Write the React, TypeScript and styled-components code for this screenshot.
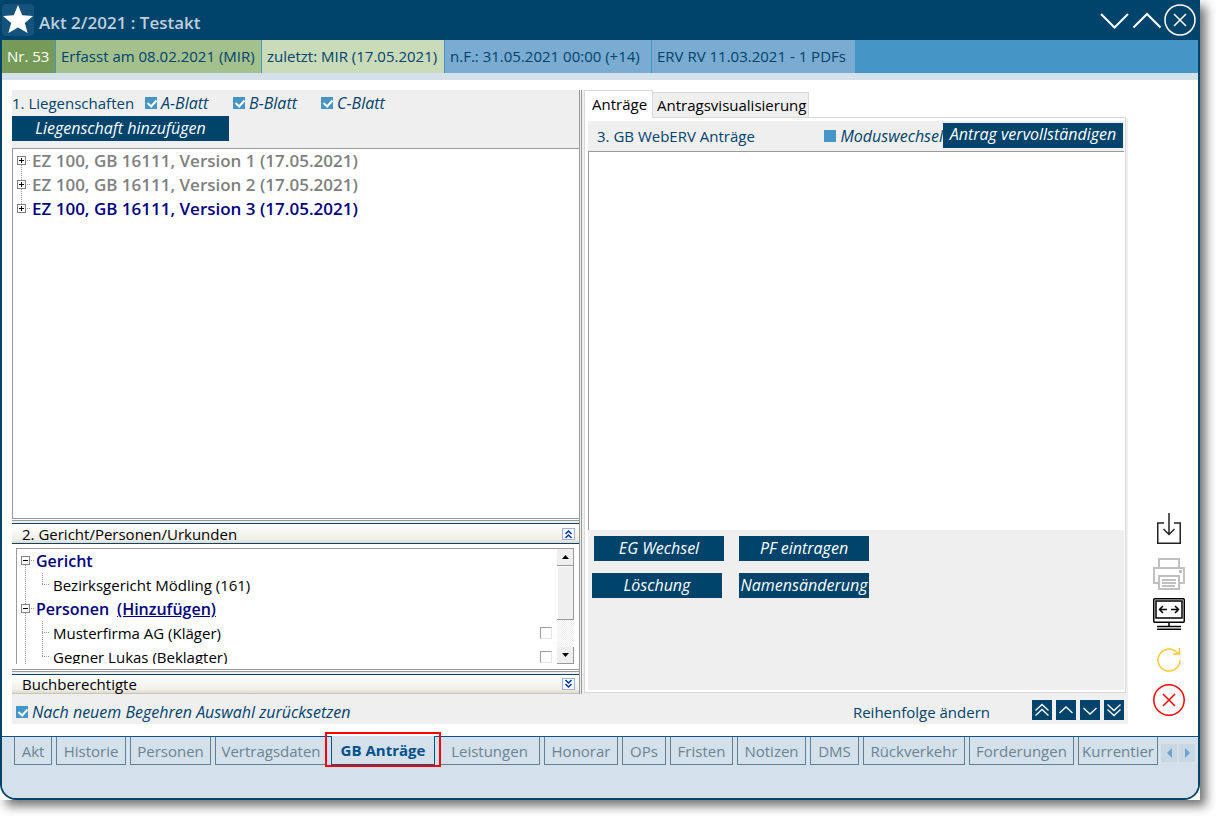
import React from "react";
import styled, { createGlobalStyle, css } from "styled-components";

const navy = "#00436b";
const grey = "#efefef";
const line = "#999999";

const GlobalStyle = createGlobalStyle`
  * { box-sizing: border-box; }
  body { margin: 0; background: #fff; overflow: hidden; }
  body, button, input { font-family: "Open Sans", sans-serif; font-size: 15px; line-height: 20px; }
  button { margin: 0; padding: 0; border: 0; background: none; color: inherit; cursor: pointer; }
  svg { display: block; }
`;

const Page = styled.div`
  height: 100vh;
  min-height: 600px;
  padding: 0 16px 16px 0;
`;
const Backdrop = styled.div`
  height: 100%;
  background: #fff;
  box-shadow: 6px 6px 10px rgba(0, 0, 0, 0.55);
`;
const Window = styled.div`
  height: 100%;
  display: flex;
  flex-direction: column;
  border: 2px solid ${navy};
  border-top: 0;
  border-radius: 0 0 16px 16px;
  background: #fff;
`;

const TitleBar = styled.header`
  height: 40px;
  display: flex;
  align-items: center;
  gap: 5px;
  padding-right: 2px;
  background: ${navy};
`;
const StarTile = styled.span`
  width: 32px;
  height: 32px;
  border-radius: 4px;
  background: #15527c;
`;
const Title = styled.h1`
  flex: 1;
  margin: 0;
  padding-top: 6px;
  font-size: 17px;
  line-height: 20px;
  font-weight: 600;
  color: #bccfdc;
`;
const WindowButtons = styled.div`
  display: flex;
  align-items: center;
  gap: 2px;
`;

const StatusBar = styled.div`
  display: flex;
  height: 40px;
  background: #4595c6;
  border-bottom: 7px solid #d4e0ea;
`;
const Segment = styled.span<{ $bg: string; $fg?: string; $min: number }>`
  display: flex;
  align-items: center;
  min-width: ${(p) => p.$min}px;
  padding: 0 5px 2px;
  white-space: nowrap;
  border-right: 1px solid #4595c6;
  background: ${(p) => p.$bg};
  color: ${(p) => p.$fg || navy};
`;

const Main = styled.main`
  flex: 1;
  min-height: 0;
  display: flex;
  padding: 10px 0 12px 10px;
`;
const Panel = styled.div`
  flex: 1;
  min-width: 0;
  display: flex;
  flex-direction: column;
  background: ${grey};
  color: ${navy};
`;
const Split = styled.div`
  flex: 1;
  min-height: 0;
  display: flex;
`;
const LeftPane = styled.section`
  flex: 567 1 0;
  min-width: 0;
  display: flex;
  flex-direction: column;
`;
const VSplitter = styled.div`
  width: 3px;
  margin-right: 2px;
  border: solid ${line};
  border-width: 0 1px;
`;
const HSplitter = styled.div`
  height: 3px;
  margin-bottom: 2px;
  border: solid ${line};
  border-width: 1px 0;
  background: #fff;
`;

const HeadRow = styled.div`
  display: flex;
  align-items: center;
  height: 26px;
  gap: 11px;
`;
const Heading = styled.h2`
  margin: 0;
  font-size: 15px;
  line-height: 20px;
  font-weight: 400;
`;
const CheckLabel = styled.label<{ $width?: number }>`
  display: flex;
  align-items: center;
  gap: 4px;
  font-size: 16px;
  font-style: italic;
  white-space: nowrap;
  ${(p) => p.$width && css`width: ${p.$width}px;`}
`;
const Tick = styled.input`
  appearance: none;
  flex: none;
  width: 12px;
  height: 12px;
  margin: 0;
  background: #4595c6;
  &:checked::after {
    content: "";
    display: block;
    width: 4px;
    height: 7px;
    margin: 1px 4px;
    border: solid #fff;
    border-width: 0 2px 2px 0;
    transform: rotate(42deg);
  }
`;
const Blatts = styled.div`
  display: flex;
`;
const Action = styled.button<{ $width: number }>`
  width: ${(p) => p.$width}px;
  height: 25px;
  padding-bottom: 2px;
  background: ${navy};
  color: #fff;
  font-size: 16px;
  font-style: italic;
  white-space: nowrap;
`;

const Tree = styled.div<{ $nested?: boolean }>`
  flex: 1;
  min-height: 0;
  overflow: hidden;
  background: #fff;
  border: solid ${line};
  border-width: 1px 0 0 1px;
  ${(p) =>
    p.$nested
      ? css`
          display: flex;
          margin: 4px 5px 5px 4px;
        `
      : css`
          margin-top: 7px;
        `}
`;
const TreeRows = styled.div`
  flex: 1;
`;
const TreeRow = styled.div<{ $size?: number; $fg?: string }>`
  display: flex;
  align-items: center;
  height: 24px;
  color: ${(p) => p.$fg || "#000"};
  font-size: ${(p) => p.$size || 15}px;
  font-weight: ${(p) => (p.$size ? 600 : 400)};
  white-space: nowrap;
`;
const AddLink = styled.a`
  margin-left: 8px;
  color: inherit;
`;
const RowCheck = styled.input`
  appearance: none;
  width: 12px;
  height: 12px;
  margin: 0 5px 0 auto;
  border: 1px solid #e4e4e4;
  border-top-color: ${line};
  border-left-color: ${line};
`;

const ScrollBar = styled.div`
  display: flex;
  flex-direction: column;
  width: 17px;
  background: repeating-conic-gradient(#fff 0 25%, #eeeeee 0 50%) 0 0 / 2px 2px;
`;
const ScrollButton = styled.button`
  height: 17px;
  display: flex;
  align-items: center;
  justify-content: center;
  background: ${grey};
  border: solid ${line};
  border-width: 0 1px 1px 0;
`;
const Thumb = styled.div`
  height: 54px;
  background: ${grey};
  border: solid ${line};
  border-width: 0 1px 1px 0;
  box-shadow: inset 1px 1px #fff;
`;
const Track = styled.div`
  flex: 1;
`;

const LowerBox = styled.div`
  height: 125px;
  display: flex;
  background: #fff;
`;
const SectionBar = styled.div<{ $last?: boolean }>`
  display: flex;
  align-items: center;
  justify-content: space-between;
  height: ${(p) => (p.$last ? 20 : 21)}px;
  padding: 0 4px 0 10px;
  border: solid ${navy};
  border-width: 1px 0;
  ${(p) => p.$last && css`border-bottom-color: #c9c5b8;`}
  background: linear-gradient(#ffffff, #f0f0e9 80%, #dedace);
  color: #000;
`;
const Fold = styled.button`
  width: 13px;
  height: 12px;
  border: 1px solid #a3b1e0;
  background: #fff;
`;

const RightPane = styled.section`
  flex: 544 1 0;
  min-width: 0;
  display: flex;
  flex-direction: column;
`;
const TabRow = styled.div`
  display: flex;
  align-items: flex-end;
  height: 28px;
  padding-right: 2px;
  background: #fff;
  color: #000;
`;
const Tab = styled.button<{ $active?: boolean }>`
  white-space: nowrap;
  border: 1px solid #d9d9d9;
  ${(p) =>
    p.$active
      ? css`
          height: 28px;
          padding: 0 5px 2px 7px;
          border-bottom: 0;
          background: #fff;
        `
      : css`
          height: 26px;
          padding: 0 2px 0 4px;
          border-left: 0;
          background: ${grey};
        `}
`;
const TabFill = styled.div`
  flex: 1;
  align-self: stretch;
  border-bottom: 1px solid #d9d9d9;
`;
const TabPane = styled.div`
  flex: 1;
  min-height: 0;
  display: flex;
  flex-direction: column;
  margin: 0 2px 1px 0;
  padding: 3px 1px 2px 3px;
  border: 1px solid #d9d9d9;
  border-top: 0;
  background: #fff;
`;
const RequestHead = styled.div`
  display: flex;
  align-items: center;
  height: 30px;
  padding: 0 1px 0 9px;
  background: ${grey};
`;
const RequestButton = styled(Action)`
  margin-bottom: 2px;
`;
const Spacer = styled.div`
  flex: 1;
`;
const RequestList = styled.div`
  flex: 1;
  border: solid ${line};
  border-width: 1px 0 0 1px;
`;
const RequestActions = styled.div`
  display: grid;
  grid-template-columns: 132px 130px;
  grid-auto-rows: 25px;
  gap: 12px 15px;
  height: 160px;
  padding: 6px 4px;
  background: ${grey};
  & > :first-child { justify-self: end; }
`;

const PanelFoot = styled.div`
  display: flex;
  align-items: center;
  height: 30px;
  padding: 6px 4px 0;
`;
const OrderButtons = styled.div`
  display: flex;
  gap: 4px;
  margin: 0 0 4px 42px;
`;
const OrderButton = styled.button`
  width: 20px;
  height: 20px;
  background: ${navy};
`;

const SideBar = styled.nav`
  width: 70px;
  display: flex;
  flex-direction: column;
  align-items: center;
  justify-content: flex-end;
  gap: 14px;
  padding: 0 0 8px 12px;
`;
const SideGroup = styled.div`
  display: flex;
  flex-direction: column;
  gap: 8px;
`;

const BottomBar = styled.footer`
  display: flex;
  height: 62px;
  padding: 0 3px 0 12px;
  border-top: 1px solid #00568a;
  border-radius: 0 0 14px 14px;
  background: #d4e0ea;
`;
const BottomTabs = styled.nav`
  flex: 1;
  min-width: 0;
  display: flex;
  align-items: flex-start;
  gap: 4px;
  overflow-x: clip;
  overflow-y: visible;
`;
const BottomTab = styled.button<{ $active?: boolean; $width: number }>`
  position: relative;
  flex: none;
  width: ${(p) => p.$width}px;
  height: 28px;
  border: 1px solid #637f92;
  border-top: 0;
  color: #6b8394;
  white-space: nowrap;
  ${(p) =>
    p.$active &&
    css`
      margin-top: -1px;
      height: 29px;
      border-color: #00568a;
      background: #d4e0ea;
      color: #00508a;
      font-weight: 700;
      z-index: 1;
      &::after {
        content: "";
        position: absolute;
        inset: -4px -7px -3px;
        border: 2px solid #f00;
      }
    `}
`;
const TabScroll = styled.div`
  display: flex;
  gap: 2px;
  margin: 7px 0 0 3px;
`;
const TabScrollButton = styled.button`
  width: 16px;
  height: 18px;
  background: #c9d7e2;
  display: flex;
  align-items: center;
  justify-content: center;
`;

type GutterProps = { up?: boolean; down?: boolean; sign?: "+" | "-" };

function RootGutter({ up, down, sign }: GutterProps) {
  return (
    <svg width="19" height="24" shapeRendering="crispEdges" fill="none" stroke={line} aria-hidden>
      {up && <path d="M8.5 0V7" strokeDasharray="1 1" />}
      {down && <path d={sign ? "M8.5 16V24" : "M8.5 0V24"} strokeDasharray="1 1" />}
      {sign && (
        <>
          <path d="M14 11.5H18" strokeDasharray="1 1" />
          <rect x="4.5" y="7.5" width="8" height="8" fill="#fff" stroke="#808080" />
          <path d={sign === "+" ? "M6 11.5H11M8.5 9V14" : "M6 11.5H11"} stroke="#000" />
        </>
      )}
    </svg>
  );
}

function LeafGutter({ down }: GutterProps) {
  return (
    <svg width="17" height="24" shapeRendering="crispEdges" fill="none" stroke={line} aria-hidden>
      <path d={down ? "M6.5 0V24" : "M6.5 0V11"} strokeDasharray="1 1" />
      <path d="M6 11.5H14" strokeDasharray="1 1" />
    </svg>
  );
}

function FoldIcon({ up }: { up?: boolean }) {
  return (
    <svg width="11" height="10" fill="none" stroke="#0033a0" strokeWidth="1.5" aria-hidden>
      <path d={up ? "M2.5 5L5.5 2L8.5 5M2.5 9L5.5 6L8.5 9" : "M2.5 1L5.5 4L8.5 1M2.5 5L5.5 8L8.5 5"} />
    </svg>
  );
}

const orderIcons = [
  { name: "Ganz nach oben", d: "M3.5 10.5L10 4.5L16.5 10.5M3.5 15.5L10 9.5L16.5 15.5" },
  { name: "Nach oben", d: "M3.5 13L10 7L16.5 13" },
  { name: "Nach unten", d: "M3.5 8L10 14L16.5 8" },
  { name: "Ganz nach unten", d: "M3.5 4.5L10 10.5L16.5 4.5M3.5 9.5L10 15.5L16.5 9.5" },
];

const versions = [1, 2, 3];

const bottomTabs = [
  { label: "Akt", width: 38 },
  { label: "Historie", width: 70 },
  { label: "Personen", width: 81 },
  { label: "Vertragsdaten", width: 112 },
  { label: "GB Anträge", width: 104 },
  { label: "Leistungen", width: 101 },
  { label: "Honorar", width: 74 },
  { label: "OPs", width: 44 },
  { label: "Fristen", width: 63 },
  { label: "Notizen", width: 69 },
  { label: "DMS", width: 49 },
  { label: "Rückverkehr", width: 102 },
  { label: "Forderungen", width: 105 },
  { label: "Kurrentier", width: 80 },
];

export default function App() {
  return (
    <Page>
      <GlobalStyle />
      <Backdrop>
        <Window>
          <TitleBar>
            <StarTile>
              <svg width="32" height="32" viewBox="0 0 32 32" aria-hidden>
                <path fill="#fff" d="M16 1L20.2 11.2L31 12L22.8 19L25.6 29L16 23.6L6.4 29L9.2 19L1 12L11.8 11.2Z" />
              </svg>
            </StarTile>
            <Title>Akt 2/2021 : Testakt</Title>
            <WindowButtons>
              <button aria-label="Verkleinern">
                <svg width="30" height="32" fill="none" stroke="#fff" strokeWidth="2">
                  <path d="M1 10L14.5 23.5L28 10" />
                </svg>
              </button>
              <button aria-label="Vergrößern">
                <svg width="30" height="32" fill="none" stroke="#fff" strokeWidth="2">
                  <path d="M1.5 23.5L15 10L28.5 23.5" />
                </svg>
              </button>
              <button aria-label="Schließen">
                <svg width="32" height="32" fill="none" stroke="#fff" strokeWidth="1.5">
                  <circle cx="16" cy="16" r="15" />
                  <path d="M10 10L22 22M22 10L10 22" />
                </svg>
              </button>
            </WindowButtons>
          </TitleBar>
          <StatusBar>
            <Segment $min={54} $bg="#769b58" $fg="#fff">Nr. 53</Segment>
            <Segment $min={206} $bg="#a4c08d">Erfasst am 08.02.2021 (MIR)</Segment>
            <Segment $min={183} $bg="#c9dbb9">zuletzt: MIR (17.05.2021)</Segment>
            <Segment $min={207} $bg="#7aabd1">n.F.: 31.05.2021 00:00 (+14)</Segment>
            <Segment $min={204} $bg="#7aabd1">ERV RV 11.03.2021 - 1 PDFs</Segment>
          </StatusBar>
          <Main>
            <Panel>
              <Split>
                <LeftPane>
                  <HeadRow>
                    <Heading>1. Liegenschaften</Heading>
                    <Blatts>
                      {["A-Blatt", "B-Blatt", "C-Blatt"].map((b) => (
                        <CheckLabel key={b} $width={88}>
                          <Tick type="checkbox" defaultChecked />
                          {b}
                        </CheckLabel>
                      ))}
                    </Blatts>
                  </HeadRow>
                  <Action $width={217}>Liegenschaft hinzufügen</Action>
                  <Tree>
                    {versions.map((v) => (
                      <TreeRow key={v} $size={17} $fg={v === 3 ? "#000080" : "#808080"}>
                        <RootGutter sign="+" up={v > 1} down={v < 3} />
                        EZ 100, GB 16111, Version {v} (17.05.2021)
                      </TreeRow>
                    ))}
                  </Tree>
                  <HSplitter />
                  <SectionBar>
                    2. Gericht/Personen/Urkunden
                    <Fold aria-label="Einklappen"><FoldIcon up /></Fold>
                  </SectionBar>
                  <LowerBox>
                    <Tree $nested>
                      <TreeRows>
                        <TreeRow $size={16} $fg="#000080">
                          <RootGutter sign="-" down />
                          Gericht
                        </TreeRow>
                        <TreeRow>
                          <RootGutter down />
                          <LeafGutter />
                          Bezirksgericht Mödling (161)
                        </TreeRow>
                        <TreeRow $size={16} $fg="#000080">
                          <RootGutter sign="-" up down />
                          Personen
                          <AddLink href="#hinzufuegen">(Hinzufügen)</AddLink>
                        </TreeRow>
                        <TreeRow>
                          <RootGutter down />
                          <LeafGutter down />
                          Musterfirma AG (Kläger)
                          <RowCheck type="checkbox" aria-label="Musterfirma AG" />
                        </TreeRow>
                        <TreeRow>
                          <RootGutter down />
                          <LeafGutter />
                          Gegner Lukas (Beklagter)
                          <RowCheck type="checkbox" aria-label="Gegner Lukas" />
                        </TreeRow>
                      </TreeRows>
                      <ScrollBar>
                        <ScrollButton aria-label="Hinauf">
                          <svg width="7" height="4"><path d="M0 4L3.5 0L7 4Z" /></svg>
                        </ScrollButton>
                        <Thumb />
                        <Track />
                        <ScrollButton aria-label="Hinunter">
                          <svg width="7" height="4"><path d="M0 0L3.5 4L7 0Z" /></svg>
                        </ScrollButton>
                      </ScrollBar>
                    </Tree>
                  </LowerBox>
                  <HSplitter />
                  <SectionBar $last>
                    Buchberechtigte
                    <Fold aria-label="Ausklappen"><FoldIcon /></Fold>
                  </SectionBar>
                </LeftPane>
                <VSplitter />
                <RightPane>
                  <TabRow>
                    <Tab $active>Anträge</Tab>
                    <Tab>Antragsvisualisierung</Tab>
                    <TabFill />
                  </TabRow>
                  <TabPane>
                    <RequestHead>
                      <Heading>3. GB WebERV Anträge</Heading>
                      <Spacer />
                      <CheckLabel>
                        <Tick type="checkbox" />
                        Moduswechsel
                      </CheckLabel>
                      <RequestButton $width={180}>Antrag vervollständigen</RequestButton>
                    </RequestHead>
                    <RequestList />
                    <RequestActions>
                      <Action $width={130}>EG Wechsel</Action>
                      <Action $width={130}>PF eintragen</Action>
                      <Action $width={130}>Löschung</Action>
                      <Action $width={130}>Namensänderung</Action>
                    </RequestActions>
                  </TabPane>
                </RightPane>
              </Split>
              <PanelFoot>
                <CheckLabel>
                  <Tick type="checkbox" defaultChecked />
                  Nach neuem Begehren Auswahl zurücksetzen
                </CheckLabel>
                <Spacer />
                Reihenfolge ändern
                <OrderButtons>
                  {orderIcons.map((o) => (
                    <OrderButton key={o.name} aria-label={o.name}>
                      <svg width="20" height="20" fill="none" stroke="#fff" strokeWidth="1.3">
                        <path d={o.d} />
                      </svg>
                    </OrderButton>
                  ))}
                </OrderButtons>
              </PanelFoot>
            </Panel>
            <SideBar>
              <button aria-label="Herunterladen">
                <svg width="32" height="32" fill="none" stroke="#222" strokeWidth="1.5">
                  <path d="M11 11H4.75V31.25H27.25V11H21M16 1V22M10.5 17L16 22.5L21.5 17" />
                </svg>
              </button>
              <SideGroup>
                <button aria-label="Drucken">
                  <svg width="32" height="32" fill="none" stroke="#c0c0c0" strokeWidth="2">
                    <path d="M6 10V1H26V10M6 25H1V10H31V25H26M6 31V18H26V31Z" />
                    <path d="M9 22H23M9 25H23M9 28H22" />
                    <path d="M26 13.5H29" strokeWidth="3" />
                  </svg>
                </button>
                <button aria-label="Bildschirm">
                  <svg width="32" height="32" fill="none" stroke="#000" strokeWidth="1.5">
                    <rect x="0.75" y="0.75" width="30.5" height="23.5" rx="1" />
                    <rect x="3" y="3" width="26" height="17" />
                    <path d="M6.5 11.5H14M10 8L6.5 11.5L10 15M18 11.5H25.5M22 8L25.5 11.5L22 15" />
                    <path d="M16 24V28M4 28.5H28M4 31.2H28" />
                  </svg>
                </button>
              </SideGroup>
              <SideGroup>
                <button aria-label="Aktualisieren">
                  <svg width="32" height="32" fill="none" stroke="#fdc830" strokeWidth="1.5">
                    <path d="M27 16A11 11 0 1 1 23.5 8L26.5 10M26.5 4V10H20" />
                  </svg>
                </button>
                <button aria-label="Abbrechen">
                  <svg width="32" height="32" fill="none" stroke="#f00" strokeWidth="1.5">
                    <circle cx="16" cy="16" r="15.2" />
                    <path d="M10 10L22 22M22 10L10 22" />
                  </svg>
                </button>
              </SideGroup>
            </SideBar>
          </Main>
          <BottomBar>
            <BottomTabs>
              {bottomTabs.map((t) => (
                <BottomTab key={t.label} $width={t.width} $active={t.label === "GB Anträge"}>
                  {t.label}
                </BottomTab>
              ))}
            </BottomTabs>
            <TabScroll>
              <TabScrollButton aria-label="Reiter zurück">
                <svg width="5" height="10" fill="#6aa5cf"><path d="M5 0V10L0 5Z" /></svg>
              </TabScrollButton>
              <TabScrollButton aria-label="Reiter weiter">
                <svg width="5" height="10" fill="#6aa5cf"><path d="M0 0V10L5 5Z" /></svg>
              </TabScrollButton>
            </TabScroll>
          </BottomBar>
        </Window>
      </Backdrop>
    </Page>
  );
}
